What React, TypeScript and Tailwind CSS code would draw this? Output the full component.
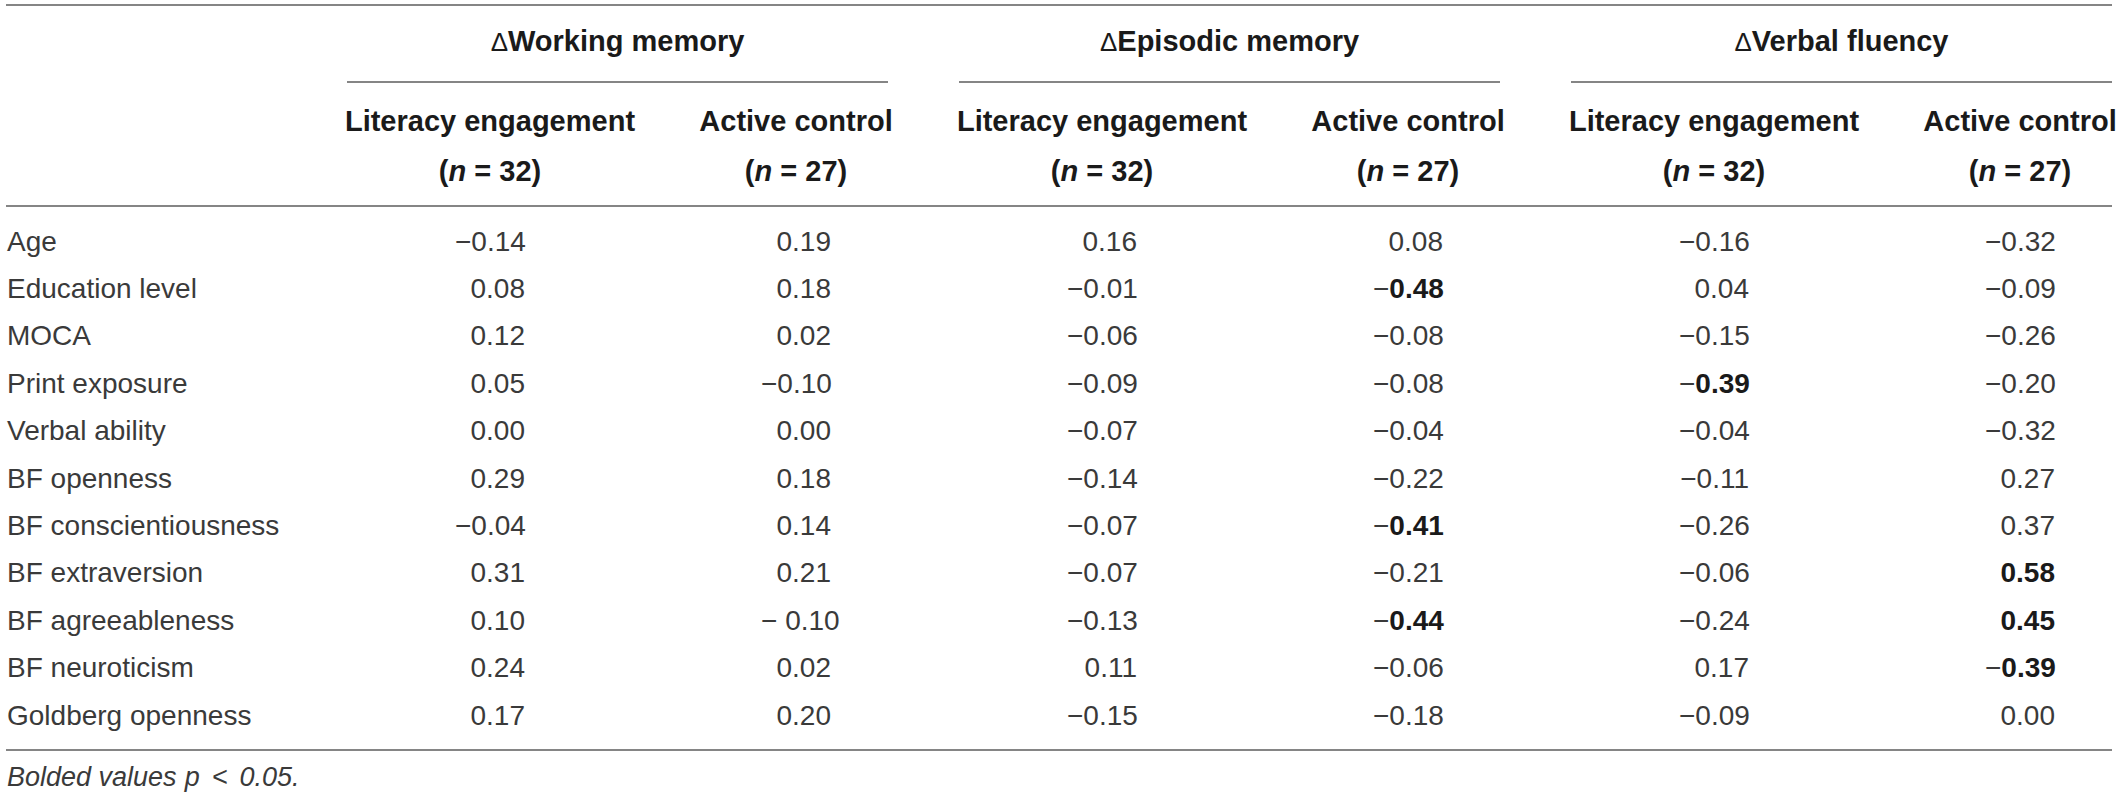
const rows: [string, ...string[]][] = [
  ['Age', '−0.14', '0.19', '0.16', '0.08', '−0.16', '−0.32'],
  ['Education level', '0.08', '0.18', '−0.01', '−*0.48', '0.04', '−0.09'],
  ['MOCA', '0.12', '0.02', '−0.06', '−0.08', '−0.15', '−0.26'],
  ['Print exposure', '0.05', '−0.10', '−0.09', '−0.08', '−*0.39', '−0.20'],
  ['Verbal ability', '0.00', '0.00', '−0.07', '−0.04', '−0.04', '−0.32'],
  ['BF openness', '0.29', '0.18', '−0.14', '−0.22', '−0.11', '0.27'],
  ['BF conscientiousness', '−0.04', '0.14', '−0.07', '−*0.41', '−0.26', '0.37'],
  ['BF extraversion', '0.31', '0.21', '−0.07', '−0.21', '−0.06', '*0.58'],
  ['BF agreeableness', '0.10', '− 0.10', '−0.13', '−*0.44', '−0.24', '*0.45'],
  ['BF neuroticism', '0.24', '0.02', '0.11', '−0.06', '0.17', '−*0.39'],
  ['Goldberg openness', '0.17', '0.20', '−0.15', '−0.18', '−0.09', '0.00'],
];

const groups = ['Working memory', 'Episodic memory', 'Verbal fluency'];
const subs = [
  { name: 'Literacy engagement', n: '32' },
  { name: 'Active control', n: '27' },
];

const gridCols = 'grid grid-cols-[331px_306px_306px_306px_306px_306px_245px]';

function Rule() {
  return <div className="h-[2px] bg-[#858585]" />;
}

// "−*0.48": the part after * is bold, the sign stays light
function Value({ v }: { v: string }) {
  const [pre, bold] = v.split('*');
  return (
    <span className="w-[70px] text-right whitespace-nowrap">
      {pre}
      {bold !== undefined && <b className="font-bold text-[#1a1a1a]">{bold}</b>}
    </span>
  );
}

export default function App() {
  return (
    <div
      className="w-[2120px] h-[799px] bg-white overflow-hidden pt-[4px]"
      style={{ fontFamily: '"Liberation Sans", Arial, sans-serif' }}
    >
      <div className="ml-[6px] w-[2106px]">
        <Rule />

        {/* group titles */}
        <div className={gridCols}>
          <div />
          {groups.map((g, i) => (
            <div key={g} className="col-span-2 flex flex-col">
              <div
                className={`h-[72px] flex items-center justify-center text-[29px] font-bold text-[#1a1a1a] ml-[10px] ${
                  i < 2 ? 'mr-[61px]' : ''
                }`}
              >
                <span>
                  <span className="font-normal text-[26px]">Δ</span>
                  {g}
                </span>
              </div>
              <div className={`mt-[3px] h-[2px] bg-[#858585] ml-[10px] ${i < 2 ? 'mr-[61px]' : ''}`} />
            </div>
          ))}
        </div>

        {/* sub headers */}
        <div className={`${gridCols} pt-[14px] pb-[8px]`}>
          <div />
          {groups.flatMap((g) =>
            subs.map((s, j) => (
              <div
                key={g + s.name}
                className={`flex flex-col items-center text-[29px] font-bold text-[#1a1a1a] whitespace-nowrap ${
                  g === 'Verbal fluency' && j === 1 ? 'pl-[61px]' : ''
                }`}
              >
                <div className="h-[50px] flex items-center">{s.name}</div>
                <div className="h-[50px] flex items-center">
                  (<i>n</i>&nbsp;=&nbsp;{s.n})
                </div>
              </div>
            ))
          )}
        </div>
        <Rule />

        {/* body */}
        <div className="pt-[11px] pb-[10px] text-[28px] text-[#3a3a3a]">
          {rows.map(([label, ...vals]) => (
            <div key={label} className={`${gridCols} h-[47.4px]`}>
              <div className="pl-[1px] flex items-center whitespace-nowrap">{label}</div>
              {vals.map((v, k) => (
                <div key={k} className={`flex items-center justify-center ${k === 5 ? 'pl-[61px]' : ''}`}>
                  <Value v={v} />
                </div>
              ))}
            </div>
          ))}
        </div>
        <Rule />

        <div className="mt-[8px] h-[36px] flex items-center pl-[1px] text-[27px] italic text-[#3a3a3a]">
          Bolded values <span className="ml-[8px]">p</span>
          <span className="mx-[12px]">&lt;</span>0.05.
        </div>
      </div>
    </div>
  );
}
